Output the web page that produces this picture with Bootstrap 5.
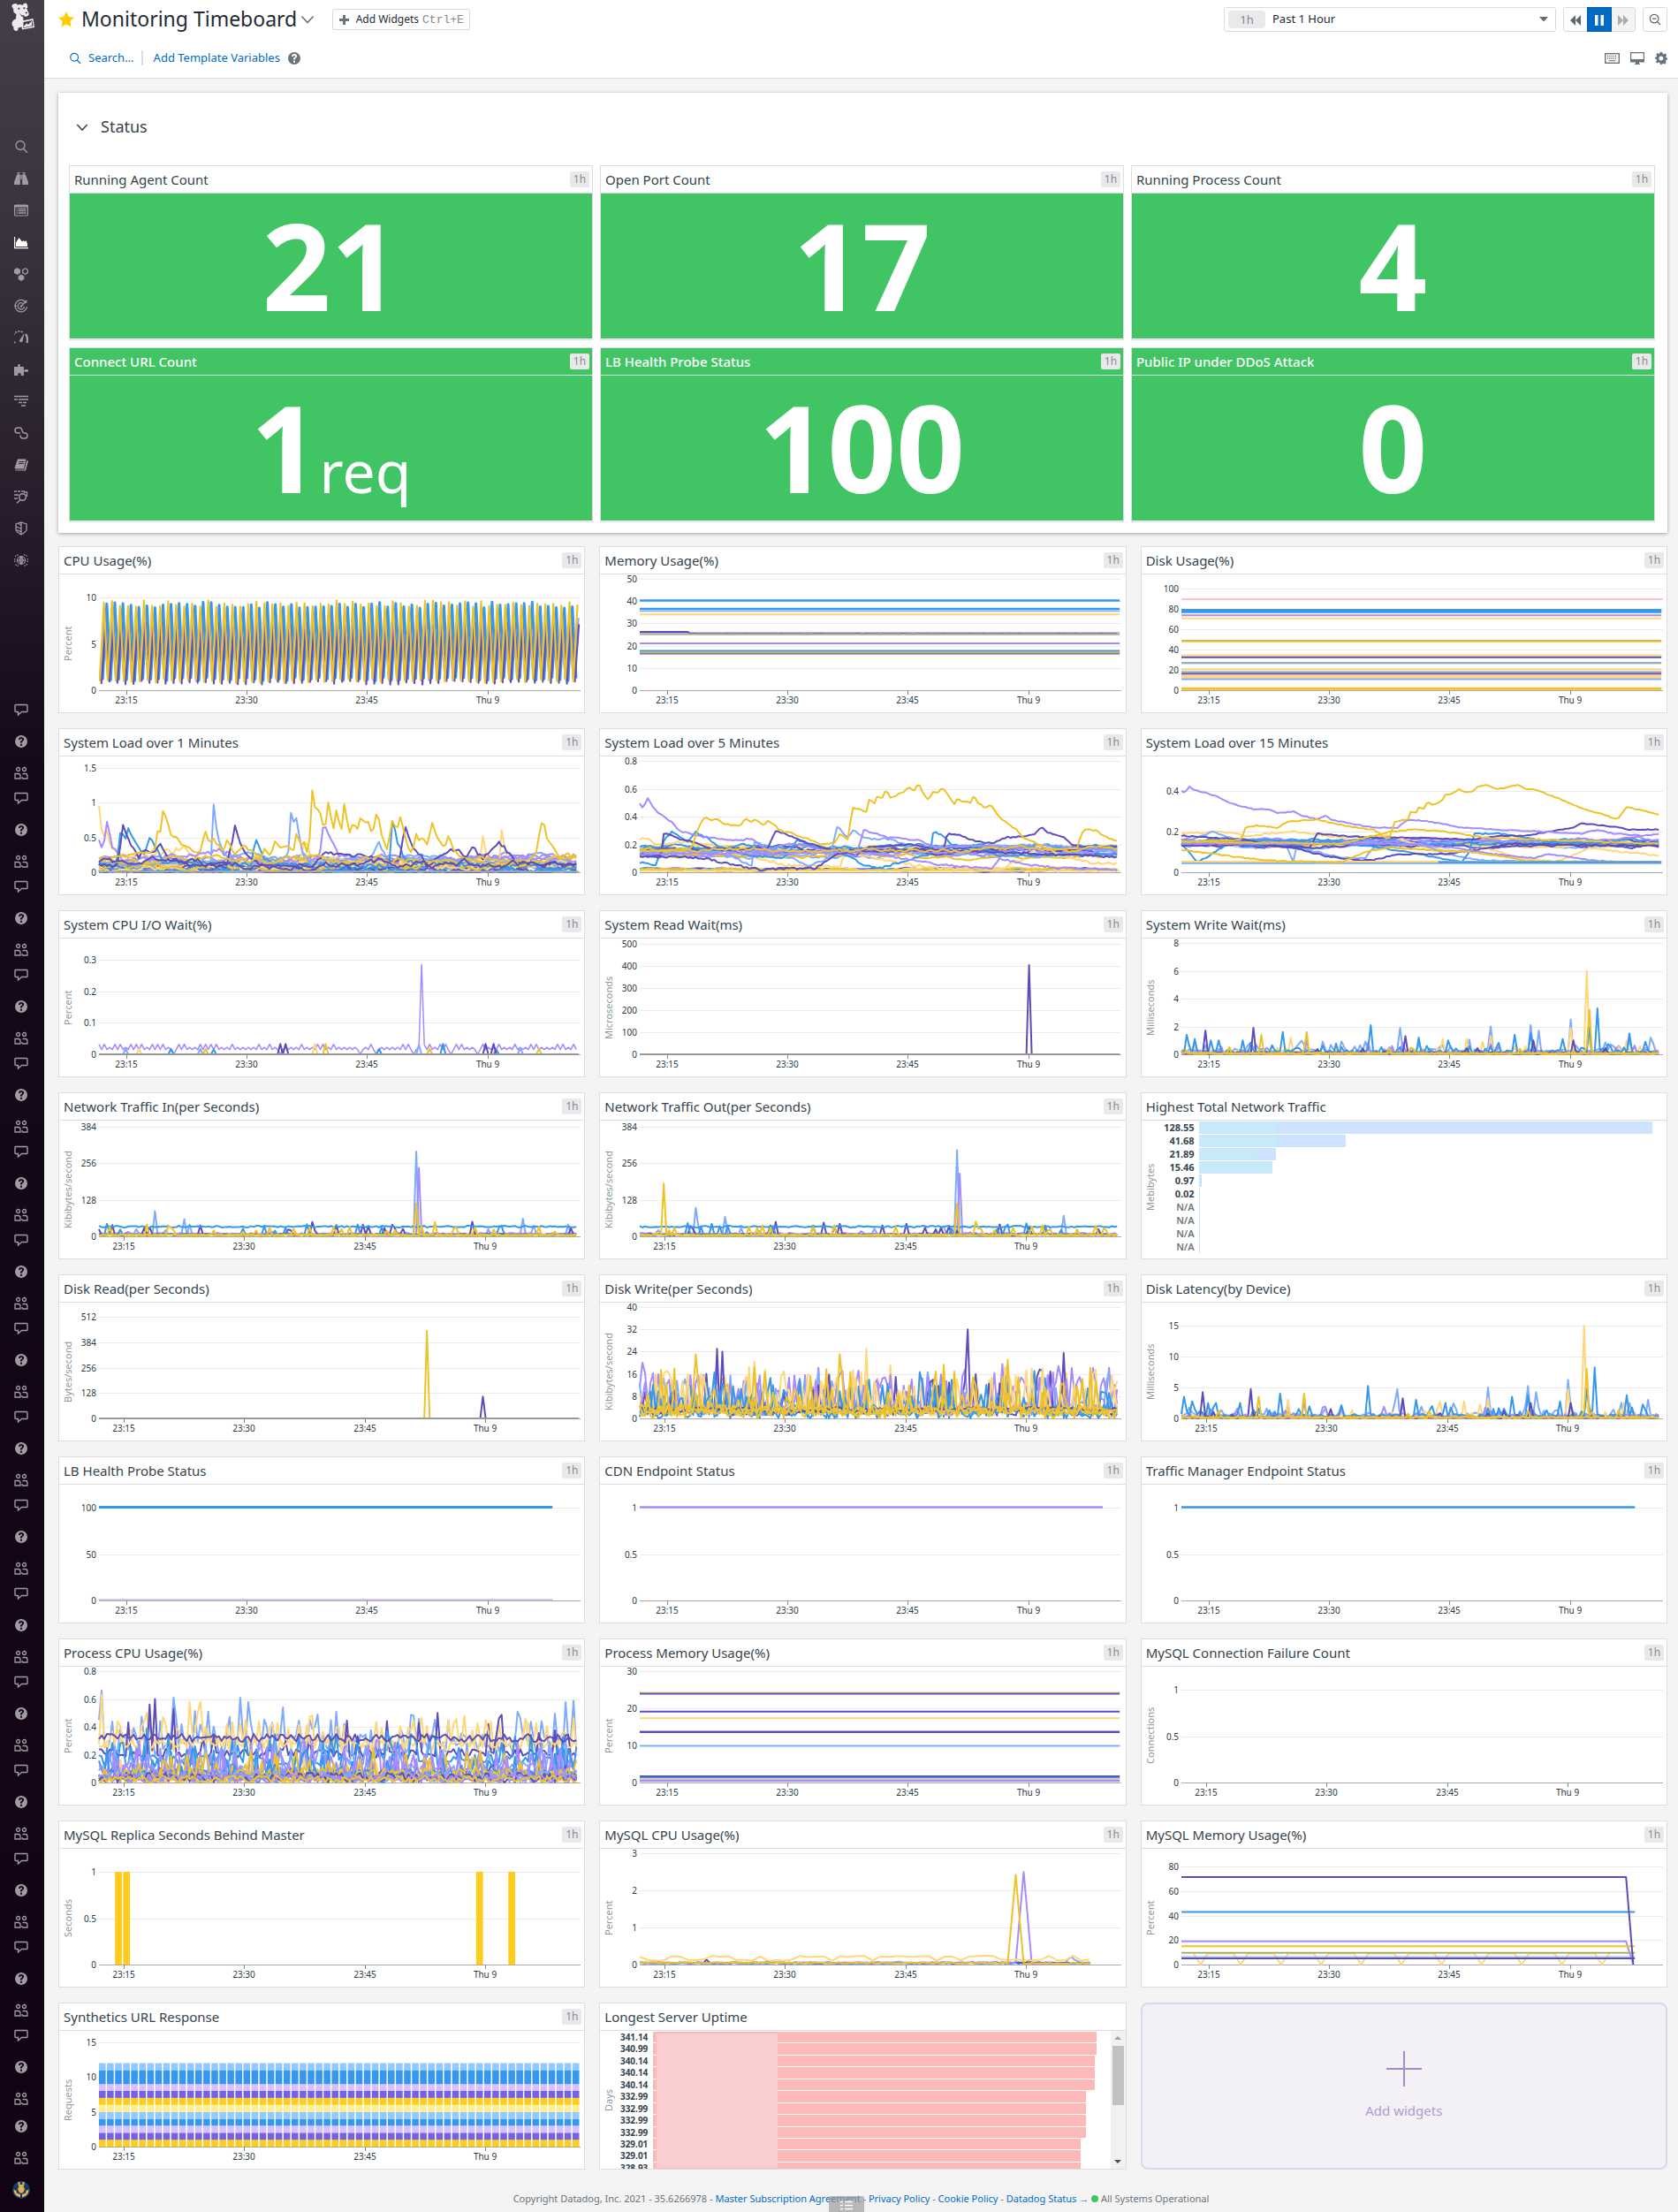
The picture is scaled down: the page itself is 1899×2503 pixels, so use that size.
<!DOCTYPE html>
<html lang="en">
<head>
<meta charset="utf-8">
<meta name="viewport" content="width=device-width, initial-scale=1">
<title>Monitoring Timeboard</title>
<link href="https://cdn.jsdelivr.net/npm/bootstrap@5.3.0/dist/css/bootstrap.min.css" rel="stylesheet">
<style>
  body { font-family: "Noto Sans", sans-serif; font-size: 13px; background: #f4f4f4; color: #2b3a45; }
  a { color: #006bc2; text-decoration: none; }
  .side { width: 50px; flex: none; background: linear-gradient(#453e4a 0, #3c3541 220px, #150819 870px, #120415 100%); color: #a09aa4; }
  .side a { color: inherit; height: 36px; width: 48px; }
  .side a.active { color: #fff; }
  .side svg { width: 16px; height: 16px; }
  .side .logo { height: 38px; color: #eceaee; }
  .side .logo svg { width: 28px; height: 32px; }
  .side .main-links { margin: 110px 0 133px; }
  .side .group { height: 100px; }
  .side .last { margin-top: 3px; padding-bottom: 7px; }
  .side a .avatar { width: 20px; height: 20px; }
  .topbar { background: #fff; border-bottom: 1px solid #dcdde0; height: 89px; padding: 8px 12px 0 16px; color: #69737b; }
  .topbar h1 { font-size: 23px; color: #1f2a33; line-height: 26px; padding-bottom: 2px; }
  .sub-tools { margin-top: 20px; }
  .view-tools { gap: 12px; }
  .tool { height: 28px; border: 1px solid #d9dbdf; background: #fff; color: #5d6870; padding: 0; width: 28px; border-radius: 3px; line-height: 1; }
  .tool + .tool { margin-left: -1px; }
  .tool.on { background: #006bc2; border-color: #005bb0; color: #fff; z-index: 1; }
  .tool.off { background: #f4f4f5; color: #a9adb1; }
  .tool-wide { height: 24px; width: 156px; margin-left: 20px; font-size: 12px; color: #1f2a33; border: 1px solid #d9dbdf; border-radius: 2px; background: #fff; padding: 0; }
  .tool-wide kbd { font: 13px "Liberation Mono", monospace; color: #82898f; background: none; padding: 0; }
  .span-pick { width: 376px; height: 28px; border: 1px solid #d9dbdf; border-radius: 3px; background: #fff; padding: 0 4px; }
  .span-pill { width: 42px; height: 20px; border-radius: 4px; background: #e9e9eb; color: #7f868b; text-align: center; line-height: 20px; }
  .span-pick select { appearance: none; border: 0; color: #1f2a33; padding: 0 0 0 8px; background: url("data:image/svg+xml,%3Csvg xmlns='http://www.w3.org/2000/svg' width='10' height='6'%3E%3Cpath d='M0 0h10L5 5.500z' fill='%235d6870'/%3E%3C/svg%3E") no-repeat right 4px center; }
  .rule { width: 2px; height: 17px; background: #dcdde0; }
  .board { padding: 16px 12px 0 16px; }
  .status { background: #fff; box-shadow: 0 1px 4px rgba(0,0,0,.35); padding: 0 14px 12px 12px; }
  .status h2 { font-size: 18px; height: 82px; padding: 4px 0 8px 8px; gap: 14px; color: #36444e; }
  .tiles { --bs-gutter-x: 8px; --bs-gutter-y: 8px; }
  .charts { --bs-gutter-x: 16px; --bs-gutter-y: 17px; margin-top: -2px; }
  .tile, .widget { background: #fff; border: 1px solid #dcdde0; }
  .tile { height: 198px; padding-bottom: 1px; }
  .widget { height: 189px; }
  .w-head { height: 31px; flex: none; border-bottom: 1px solid #dcdde0; padding: 0 3px 0 5px; }
  .w-head h3 { font-size: 15px; color: #36444e; line-height: 30px; }
  .w-head span { width: 22px; height: 18px; border-radius: 2px; background: #e9e9eb; color: #858b90; font-size: 12px; line-height: 18px; text-align: center; }
  .big { background: #41c464; color: #fff; font-weight: 700; font-size: 136px; line-height: 1; padding-bottom: 2px; }
  .big small { font-size: 66px; font-weight: 400; }
  .tile.solid .w-head { background: #41c464; border-color: #dcf4e2; }
  .tile.solid h3 { color: #fff; font-weight: 500; }
  .unit { width: 20px; flex: none; font-size: 11px; color: #90969a; writing-mode: vertical-rl; transform: rotate(180deg); text-align: center; line-height: 20px; }
  .plot { flex: 1; min-width: 0; height: 156px; overflow: hidden; }
  .plot svg { display: block; }
  .plot text { font-size: 10px; fill: #2b3a45; }
  .rank { display: grid; flex: 1; min-width: 0; }
  .rank b { text-align: right; color: #36444e; }
  .traffic { grid-template-columns: 40px 1fr; column-gap: 5px; grid-auto-rows: 15px; padding: 0 16px 0 0; font-size: 11px; line-height: 15px; }
  .traffic b.na { color: #6d767d; font-weight: 600; }
  .traffic i { height: 14px; margin-top: 1px; background: #cce2ff; }
  .traffic i u { display: block; height: 14px; background: #c6eafa; }
  .uptime-scroll { overflow-y: scroll; scrollbar-width: none; height: 156px; flex: 1; }
  .uptime-scroll::-webkit-scrollbar { display: none; }
  .uptime { grid-template-columns: 34px 1fr; column-gap: 6px; grid-template-rows: repeat(20, 1fr); height: 270px; padding: 1px 16px 0 0; font-size: 10px; line-height: 12px; }
  .uptime i { background: #fdb9b8; margin-bottom: 1px; }
  .bar-track { width: 17px; height: 156px; background: #f1f1f1; padding: 6px 0; }
  .bar-thumb { width: 13px; height: 67px; margin: 7px 0 auto; background: #c1c1c1; }
  .veil { left: 64px; top: 3px; bottom: 1px; width: 137px; background: #facdcf; }
  .add-widget { height: 189px; border: 2px solid #dcd7ea; border-radius: 8px; background: #f3f1f6; color: #b39bce; font-size: 15px; padding: 0; }
  footer { font-size: 11px; color: #69737b; height: 49px; padding-top: 24px; line-height: 18px; }
  .dot { width: 8px; height: 8px; background: #41c464; }
  .dock { left: 50%; bottom: 0; margin-left: -12px; width: 40px; height: 19px; border: 0; border-radius: 2px 2px 0 0; background: rgba(150,150,150,.65); padding: 0; line-height: 1; }
</style>
<script src="https://cdn.jsdelivr.net/npm/bootstrap@5.3.0/dist/js/bootstrap.bundle.min.js"></script>
</head>
<body>
<svg class="d-none" xmlns="http://www.w3.org/2000/svg">
  <symbol id="i-search" viewBox="0 0 16 16"><circle cx="7" cy="6.500" r="5" fill="none" stroke="currentColor" stroke-width="1.300"/><path d="M10.500 10.200 15 14.700" stroke="currentColor" stroke-width="1.500"/></symbol>
  <symbol id="i-zoomout" viewBox="0 0 16 16"><circle cx="7" cy="7" r="5.500" fill="none" stroke="currentColor" stroke-width="1.400"/><path d="M11 11l4 4M4.500 7h5" stroke="currentColor" stroke-width="1.500"/></symbol>
  <symbol id="i-bino" viewBox="0 0 16 16"><path fill="currentColor" d="M3.500 1h3v1.500h-3zM9.500 1h3v1.500h-3zM3.300 3.200h3.500V15H0v-3zM12.700 3.200H9.200V15H16v-3zM7.300 4h1.400v5H7.300z"/></symbol>
  <symbol id="i-list" viewBox="0 0 16 16"><rect x=".6" y="2" width="14.800" height="12" rx="1" fill="none" stroke="currentColor" stroke-width="1.200"/><path fill="currentColor" d="M0 2h16v2.500H0z"/><path d="M2.500 6.500h1m1 0h9M2.500 8.700h1m1 0h9M2.500 11h1m1 0h9" stroke="currentColor" stroke-width="1.300"/></symbol>
  <symbol id="i-chart" viewBox="0 0 16 16"><path fill="currentColor" d="M0 2h1.200v12H16v1.200H0zM2 13V8.500L5.500 3 9 7.500 10.500 6l1.500 1.500L13.500 6 15 10v3z"/></symbol>
  <symbol id="i-hex" viewBox="0 0 16 16"><path fill="currentColor" d="M3.500 1 7 3v4L3.500 9 0 7V3zM8 8.500l3.300 1.900v3.700L8 16l-3.300-1.900v-3.700z"/><path d="M12.500 1.700 15.300 3.300v3.300l-2.800 1.600-2.800-1.600V3.300z" fill="none" stroke="currentColor" stroke-width="1.300"/></symbol>
  <symbol id="i-target" viewBox="0 0 16 16"><g fill="none" stroke="currentColor" stroke-width="1.300"><path d="M11.500 2.500A6.700 6.700 0 1 0 14.500 9M10 5.200A3.700 3.700 0 1 0 11.600 9M8 8.500 14.500 2M12 2v2.300h2.500"/></g><circle cx="8" cy="8.500" r="1.300" fill="currentColor"/><path d="M0 8h3" stroke="currentColor"/></symbol>
  <symbol id="i-gauge" viewBox="0 0 16 16"><path d="M1.500 14A7 7 0 0 1 10 2.300" fill="none" stroke="currentColor" stroke-width="1.700" stroke-dasharray="2 1.300"/><path d="M13 4q3.500 5 1.300 10" fill="none" stroke="currentColor" stroke-width="2.400"/><path d="M11.500 3 9.700 11.500a1.800 1.800 0 1 1-3.200-1.300z" fill="currentColor"/></symbol>
  <symbol id="i-puzzle" viewBox="0 0 16 16"><path fill="currentColor" d="M0 5h4.500q-1.200-3 1-3t1 3H11v4q3-1.500 5-.5v2q-2 1-5-.5V15H7.500q1-3-1.500-3t-1.500 3H0z"/></symbol>
  <symbol id="i-lines" viewBox="0 0 16 16"><path d="M0 2.500h16M0 6h4m1 0h11M5 9.500h4m1 0h4M8 13h5" stroke="currentColor" stroke-width="1.700"/></symbol>
  <symbol id="i-link" viewBox="0 0 16 16"><path d="M7 8H4a3 3 0 0 1 0-6h2q2.500 0 3 3t3 3a3 3 0 0 1 0 6H10q-3 0-3-3.500" fill="none" stroke="currentColor" stroke-width="1.500"/></symbol>
  <symbol id="i-book" viewBox="0 0 16 16"><path fill="currentColor" d="M4 1.500h9.500L11 12.500H1.500L.5 11.500zM14.500 2.500 16 4l-3 10.500H2l-1-1h10.500z"/><path d="M5.500 4.500h6M5 6.500h6" stroke="#2d2432"/></symbol>
  <symbol id="i-trace" viewBox="0 0 16 16"><path d="M0 2h3m1 0h3m1 0h4M0 6h5M0 10h4" stroke="currentColor" stroke-width="1.700"/><circle cx="9.500" cy="8.500" r="3.800" fill="none" stroke="currentColor" stroke-width="1.500"/><path d="M7 11.500 3 15.500M11 3h3.500v5" stroke="currentColor" stroke-width="1.400" fill="none"/></symbol>
  <symbol id="i-shield" viewBox="0 0 16 16"><path d="M8 1l6 2v7q-2 3-6 5-4-2-6-5V3zM8 1v14M2.500 6 8 8.500M3 9.500l5 2.300M5 2.500l3 2" fill="none" stroke="currentColor" stroke-width="1.300"/></symbol>
  <symbol id="i-globe" viewBox="0 0 16 16"><g fill="none" stroke="currentColor" stroke-width="1.200"><circle cx="8" cy="8" r="4.500"/><path d="M3.500 8h9M8 3.500v9M8 3.500q-4 4.500 0 9M8 3.500q4 4.500 0 9"/></g><path d="M1 3.500 5 1.500M11 1.500l4 2M15 12.500l-4 2M5 14.500l-4-2M.8 6v4M15.200 6v4" stroke="currentColor" stroke-width="1.300" stroke-dasharray="1.500 1"/></symbol>
  <symbol id="i-chat" viewBox="0 0 16 16"><path d="M2 2.500h12q1 0 1 1v6q0 1-1 1H8.500L4.500 14v-3.500H2q-1 0-1-1v-6q0-1 1-1z" fill="none" stroke="currentColor" stroke-width="1.400"/></symbol>
  <symbol id="i-help" viewBox="0 0 16 16"><path fill="currentColor" fill-rule="evenodd" d="M8 1a7 7 0 1 0 0 14A7 7 0 0 0 8 1zM5 6q0-3 3-3t3.200 2.600q0 1.700-2.200 2.900v1H7V7.700q2-.7 2-2T8 4.800 6.900 6zM7 10.700h2v2H7z"/></symbol>
  <symbol id="i-team" viewBox="0 0 16 16"><g fill="none" stroke="currentColor" stroke-width="1.300"><circle cx="4.500" cy="3.500" r="2"/><circle cx="11.500" cy="3.500" r="2"/><path d="M1 14V8.500h3.500Q7 8.500 7 11v3zM9 14h6v-3q0-2.500-2.500-2.500H9.500M9 14v-2"/></g></symbol>
  <symbol id="i-down" viewBox="0 0 16 16"><path d="M1.500 4.500 8 11.500l6.500-7" fill="none" stroke="currentColor" stroke-width="1.700"/></symbol>
</svg>

<div class="d-flex position-relative">
  <nav class="side d-flex flex-column" aria-label="Main">
    <a class="logo d-flex align-items-center justify-content-center w-100" href="#" aria-label="Home"><svg viewBox="0 0 28 32" fill="currentColor"><path d="M2.500 3q1.500-2.500 5-2l1 1.500Q12 1.500 14.500 3q1-3 4-2.500 2 1.500 1.800 5-.8 1-1.300.3l1.500 4q1.500 1.500 1 4-1.500 2.500-4.500 1.700l-2-.7.5 5.500 11-2.300 1.500 10L14 30.500l-.5-3-4 1q.5 4-3 3.500-3-1-2-4.500-2.500-1.500-2-4.500Q3.500 19 7 18.500L7.500 13 4.500 11l-.5-4.500q-2-1-1.500-3.500z"/><path d="M9.500 5.800h1.800v2H9.500zM15.500 5.300h1.800v2h-1.800zM17.500 11q2-1 2.700.3l-1.700 1.400zM10 11.500q3 3.500 7 3l-3 1.500zM15.500 22l10-2 1 6.500L15.500 29z" fill="#403945"/><path d="M16 26.500l3-3 2 1.300 4-4v5.500l-9 2z"/></svg></a>
    <div class="main-links d-flex flex-column" id="mainLinks"></div>
    <div id="groups"></div>
    <div class="last d-flex flex-column" id="lastLinks"></div>
  </nav>

  <div class="flex-grow-1 d-flex flex-column overflow-hidden">
    <header class="topbar">
      <div class="d-flex align-items-center">
        <svg width="18" height="18" viewBox="0 0 18 18" class="flex-shrink-0"><path fill="#ffcc00" d="M9 0l2.800 5.900 6.200.8-4.600 4.400 1.200 6.400L9 14.400l-5.600 3.100 1.200-6.400L0 6.700l6.200-.8z"/></svg>
        <h1 class="mb-0 ms-2 fw-normal">Monitoring Timeboard</h1>
        <svg width="16" height="16" class="ms-1"><use href="#i-down"/></svg>
        <button class="tool-wide d-flex align-items-center justify-content-center gap-1" type="button"><svg width="11" height="11" viewBox="0 0 11 11" class="me-1"><path d="M5.500 0v11M0 5.500h11" stroke="#69737b" stroke-width="3"/></svg>Add Widgets <kbd>Ctrl+E</kbd></button>
        <div class="ms-auto d-flex gap-2">
          <div class="span-pick d-flex align-items-center">
            <span class="span-pill">1h</span>
            <label for="span" class="visually-hidden">Time span</label>
            <select id="span" class="flex-grow-1"><option>Past 1 Hour</option></select>
          </div>
          <div class="btn-group" role="group" aria-label="Playback">
            <button class="tool rounded-end-0" type="button" aria-label="Back"><svg width="12" height="12" viewBox="0 0 12 12"><path fill="currentColor" d="M6 0v12L0 6zM12 0v12L6 6z"/></svg></button>
            <button class="tool on rounded-0" type="button" aria-label="Pause"><svg width="12" height="12" viewBox="0 0 12 12"><path fill="currentColor" d="M1 0h3.500v12H1zM7.500 0H11v12H7.500z"/></svg></button>
            <button class="tool off rounded-start-0" type="button" aria-label="Forward"><svg width="12" height="12" viewBox="0 0 12 12"><path fill="currentColor" d="M0 0v12l6-6zM6 0v12l6-6z"/></svg></button>
          </div>
          <button class="tool" type="button" aria-label="Zoom out"><svg width="14" height="14"><use href="#i-zoomout"/></svg></button>
        </div>
      </div>
      <div class="sub-tools d-flex align-items-center ps-2">
        <a href="#" class="d-flex align-items-center ms-1"><svg width="14" height="14" class="me-2"><use href="#i-search"/></svg>Search...</a>
        <span class="rule mx-2"></span>
        <a href="#" class="ms-1">Add Template Variables</a>
        <svg width="16" height="16" class="ms-2"><use href="#i-help"/></svg>
        <div class="view-tools ms-auto d-flex align-items-center">
          <svg width="17" height="12" viewBox="0 0 17 12"><rect x=".7" y=".7" width="15.600" height="10.600" fill="none" stroke="currentColor" stroke-width="1.400"/><path d="M3 3.500h11M3 6h11" stroke="currentColor" stroke-width="1.300" stroke-dasharray="1.200 1"/><path d="M4.500 8.700h8" stroke="currentColor"/></svg>
          <svg width="16" height="14" viewBox="0 0 16 14"><path d="M.6 9V.6h14.800V9" fill="none" stroke="currentColor" stroke-width="1.200"/><path fill="currentColor" d="M0 8h16v3.500h-6V13h1v1H5v-1h1v-1.500H0z"/></svg>
          <svg width="14" height="14" viewBox="0 0 14 14"><path fill="currentColor" fill-rule="evenodd" d="M5.700 0h2.600l.4 1.900 1.100.5L11.500 1.300l1.700 2-1 1.700.3 1.200 1.500.6v1.700l-1.700.7-.5 1.200.9 1.600-1.800 1.700-1.600-1-1.100.5L7.700 14H6l-.7-1.900-1.200-.5-1.700 1-1.500-1.800L2 9.200 1.700 8 0 7.500V5.700l1.700-.5.5-1.100-1-1.700 1.800-1.500 1.600 1 .8-.3zM7 4.500a2.500 2.500 0 1 0 0 5 2.500 2.500 0 0 0 0-5z"/></svg>
        </div>
      </div>
    </header>

    <main class="board">
      <section class="status">
        <h2 class="fw-normal mb-0 d-flex align-items-center"><svg width="14" height="14"><use href="#i-down"/></svg><span>Status</span></h2>
        <div class="row row-cols-3 tiles" id="tiles"></div>
      </section>
      <section class="row row-cols-3 charts" id="charts"></section>
    </main>
    <footer class="text-center">Copyright Datadog, Inc. 2021 - 35.6266978 - <a href="#">Master Subscription Agreement</a> - <a href="#">Privacy Policy</a> - <a href="#">Cookie Policy</a> - <a href="#">Datadog Status →</a> <span class="dot rounded-circle d-inline-block"></span> All Systems Operational</footer>
  </div>
  <button class="dock position-absolute" type="button" aria-label="Shortcuts"><svg width="14" height="11" viewBox="0 0 14 11"><path d="M0 1.500h3m2 0h9M0 5.500h3m2 0h9M0 9.500h3m2 0h9" stroke="#fff" stroke-width="1.600"/></svg></button>
</div>

<script>
const byId = id => document.getElementById(id);
const link = (icon, label, cls = '') => `<a href="#" aria-label="${label}" class="d-flex align-items-center justify-content-center ${cls}"><svg><use href="#i-${icon}"/></svg></a>`;
byId('mainLinks').innerHTML = [['search','Search'],['bino','Watchdog'],['list','Events'],['chart','Dashboards','active'],['hex','Infrastructure'],['target','Monitors'],['gauge','Metrics'],['puzzle','Integrations'],['lines','APM'],['link','CI'],['book','Notebooks'],['trace','Logs'],['shield','Security'],['globe','UX Monitoring']].map(l => link(...l)).join('');
byId('groups').innerHTML = `<div class="group">${link('chat','Chat')}${link('help','Help')}${link('team','Team')}</div>`.repeat(16);
byId('lastLinks').innerHTML = link('help','Help') + link('team','Team') + '<a href="#" aria-label="Account" class="d-flex align-items-center justify-content-center"><svg class="avatar" viewBox="0 0 20 20"><circle cx="10" cy="10" r="10" fill="#163a63"/><path fill="#e0b060" d="M6.500 1h2v3h3V1h2v3.500L12.500 6l1.500 3-1.500 3.500L10 14l-2.500-1.500L6 9l1.500-3-1-1.500zM1.500 9.500l3 1.500.5 2.500 4 1.500v3.500l-3.500-1.500q-4-2-4-7.500zM18.500 9.500l-3 1.500-.5 2.500-4 1.500v3.500l3.500-1.500q4-2 4-7.500z"/></svg></a>';

const head = (title, badge = true, weight = 'fw-normal') => `<div class="w-head d-flex align-items-center justify-content-between"><h3 class="mb-0 ${weight} text-truncate">${title}</h3>${badge ? '<span>1h</span>' : ''}</div>`;
byId('tiles').innerHTML = [['Running Agent Count','21'],['Open Port Count','17'],['Running Process Count','4'],['Connect URL Count','1<small>req</small>',1],['LB Health Probe Status','100',1],['Public IP under DDoS Attack','0',1]]
  .map(([t, v, s]) => `<div class="col"><div class="tile d-flex flex-column ${s ? 'solid' : ''}">${s ? head(t, true, '') : head(t)}<div class="big flex-grow-1 d-flex align-items-center justify-content-center"><div>${v}</div></div></div></div>`).join('');

/* palette */
const Y = '#efc328', LY = '#ffd779', B = '#3598ec', LB = '#7fabff', P = '#5c4dbd', LP = '#a58bff', MIX = [LB, LP, P, B, LY, Y];

/* seeded random numbers keep every load the same */
let seed = 1;
const rnd = () => { seed = (seed + 0x6D2B79F5) | 0; let t = Math.imul(seed ^ seed >>> 15, 1 | seed); t = t + Math.imul(t ^ t >>> 7, 61 | t) ^ t; return ((t ^ t >>> 14) >>> 0) / 4294967296; };
const END = 59.8;
const steps = f => { const a = []; for (let i = 0; i < 180; i++) a.push([i * END / 180, Math.max(0, f(i))]); return a; };
const flat = (c, v, w = 1.5, end = END) => ({ c, w, p: [[0, v], [end, v]] });
/* linear path through [minute, value, minute, value, ...] with jitter */
const keyed = (c, k, j) => ({ c, w: 2, p: steps(i => { const t = i / 3; let n = 2; while (n < k.length - 2 && k[n] < t) n += 2; const u = Math.min(1, Math.max(0, (t - k[n - 2]) / (k[n] - k[n - 2]))); return k[n - 1] + (k[n + 1] - k[n - 1]) * u + (rnd() - .5) * j; }) });
const drift = (c, v, j) => { let x = v; return { c, w: 2, p: steps(() => { x += (v - x) * .15 + (rnd() - .5) * j; return x; }) }; };
const spikes = (c, base, noise, rate, hi, own = {}) => ({ c, w: 2, p: steps(i => own[i] ?? base + rnd() * noise + (rnd() < rate ? (.3 + rnd() * .7) * hi : 0)) });
const wave = (c, from, to, lo, hi, w) => { const p = []; for (let m = -1; m < 60; m++) p.push([m + from, lo + rnd() * .4], [m + to, hi + rnd() * .7 - .2]); return { c, w, p: p.filter(q => q[0] >= 0 && q[0] <= END) }; };
const many = (n, f) => Array.from({ length: n }, (_, i) => f(i, MIX[i % 6]));

const charts = [
  { t: 'CPU Usage(%)', u: 'Percent', max: 12, k: [0, 5, 10], s: () => [wave(LB, .2, .75, 1, 8, 2), wave(LP, .1, .6, 1, 7, 2), wave(B, .45, .98, 1, 9, 3), wave(P, .3, .8, .6, 6.8, 2), wave(Y, .1, .62, .8, 9.2, 2.2)] },
  { t: 'Memory Usage(%)', max: 50, k: [0, 10, 20, 30, 40, 50], s: () => [flat(B, 40.3, 2.5), flat(B, 36.5, 2.5), flat(LB, 35.5, 1.5), flat(LY, 34, 2), flat(LB, 25.8, 1.5), keyed(P, [0, 26.2, 6, 26.2, 6.3, 25.3, 60, 25.3], .1), flat('#b8b384', 25.1, 2), flat(LP, 21, 2), flat(B, 17.7, 2), flat(P, 16.4, 1.5), flat('#c4a94c', 16.9, 2)] },
  { t: 'Disk Usage(%)', max: 110, k: [0, 20, 40, 60, 80, 100], s: () => [flat('#ffc4c4', 90, 2, 60), flat(B, 79, 3), flat(B, 77, 2), flat(LP, 74, 2), flat(LY, 71, 2), flat('#a08c50', 49, 1.5), flat(Y, 48.2, 2), flat(LY, 34.5, 2), flat(P, 32.5, 2), flat(LB, 27, 2), flat(LY, 25.8, 1), flat(LY, 20.8, 2), flat('#8fa3c0', 17.8, 2), flat(P, 16.2, 2), flat(LY, 13.5, 4), flat(LB, 10.8, 2), flat(Y, 1.5, 3)] },
  { t: 'System Load over 1 Minutes', max: 1.6, k: [0, .5, 1, 1.5], s: () => [...many(18, (i, c) => drift(c, .01 + i % 7 * .028, .07)),
      keyed(LY, [0,.93,.5,.5,1,.6,1.7,.3,4,.2,9,.3,10.5,.35,13,.1,25,.15,25.8,.45,26.5,.2,47.5,.1,48,.5,48.7,.15,50,.15,50.3,.6,51,.2,52,.1,60,.1], .08),
      keyed(LP, [0,.43,.4,.3,1,.7,1.7,.35,3,.15,10,.25,15,.3,20,.1,27.5,.2,28.1,.68,29,.5,30,.25,35,.15,60,.25], .08),
      keyed(LB, [0,.1,14,.15,14.33,1,14.8,.5,15.5,.3,17,.1,23.6,.2,24,.83,24.3,.7,24.6,.82,25.5,.25,27,.15,34,.2,35,.42,36,.2,60,.1], .05),
      keyed(B, [0,.1,2.2,.1,2.7,.6,3.3,.45,3.7,.63,4.5,.48,5.5,.25,6.3,.48,6.7,.45,8,.15,19,.1,19.6,.5,20.5,.2,22,.1,36.3,.1,36.7,.77,37.3,.45,38.3,.15,60,.05], .07),
      keyed(P, [0,.1,2.3,.1,3,.65,4,.4,5,.2,5.8,.37,6.5,.25,7.6,.4,8.5,.2,11,.1,16,.1,17,.65,17.7,.4,18.5,.25,20,.1,27,.1,28,.28,32,.25,37.5,.15,38.3,.68,39,.4,40,.28,41,.1,44.6,.35,46,.2,46.6,.38,48,.2,50,.44,51,.3,52,.15,60,.1], .06),
      keyed(Y, [0,.15,2,.22,6.7,.3,7.1,.36,7.4,.65,7.7,.58,8,.89,8.6,.7,9.1,.5,9.7,.52,10.5,.38,11.5,.33,12.6,.28,13.3,.58,13.8,.4,14.3,.48,15,.38,15.5,.28,16,.45,17,.27,18,.38,20.3,.2,20.7,.37,21.3,.22,22,.43,22.8,.36,23.5,.4,24.3,.3,24.6,.55,25.3,.4,25.7,.42,26.2,.2,26.67,1.18,27,.92,27.5,.9,28.2,.6,28.67,.99,29.3,.6,29.7,.9,30.3,.58,30.67,.98,31.3,.55,31.8,.75,32.2,.58,32.8,.83,33.2,.63,33.5,.8,34,.6,34.4,.63,34.8,.92,35.3,.55,36,.32,36.7,.77,37.2,.6,37.7,.8,38.5,.4,39.2,.25,39.6,.57,40,.45,40.5,.52,41,.4,41.7,.72,42.2,.5,43.2,.33,43.7,.53,44.2,.35,45,.25,47,.15,50,.1,54,.2,54.7,.3,55.3,.7,55.7,.68,56,.5,56.6,.4,57.4,.22,60,.2], .04), drift(Y, .17, .08), drift(P, .12, .08), flat('#9fb0a0', .01, 2)] },
  { t: 'System Load over 5 Minutes', max: .8, k: [0, .2, .4, .6, .8], s: () => [...many(10, (i, c) => drift(c, .12 + i % 5 * .016, .02)), ...many(6, (i, c) => drift(c, .02, .012)), flat(LY, .01, 2),
      keyed(LY, [0,.24,1,.25,2,.2,5,.22,9,.2,12,.16,15,.1,18,.05,25,.04,25.7,.16,28,.12,33,.06,38,.03,45,.02,48,.1,50,.2,53,.12,56,.07,60,.06], .02),
      keyed(LB, [0,.15,10,.15,14,.05,14.3,.22,16,.18,19,.1,21,.05,23.7,.1,24.7,.33,26,.25,26.7,.3,28.5,.24,31,.24,33,.2,38,.18,50,.2,60,.15], .015),
      keyed(B, [0,.07,2,.05,3,.22,4,.3,5,.25,6,.22,7,.29,8,.26,10,.18,14,.12,18,.1,19.7,.23,22,.18,26,.12,28,.05,30,.03,36.3,.13,36.7,.29,38,.26,39,.2,42,.18,45,.12,60,.13], .015),
      keyed(P, [0,.13,2.7,.12,3,.28,5,.24,7,.21,9,.17,16,.17,17,.3,18,.28,20,.23,22,.19,25,.15,27,.12,28.5,.18,34,.2,38,.15,38.4,.28,40,.27,42,.22,44,.21,46,.25,48,.26,49.5,.28,50.2,.32,51,.29,53,.25,54,.2,55.5,.18,60,.18], .012),
      keyed(LP, [0,.5,.4,.46,1,.53,1.5,.48,2.5,.42,4,.36,5,.3,7,.26,9,.25,12,.23,14,.24,16,.15,17,.18,18,.2,20,.2,22,.17,27,.12,27.6,.22,28,.3,29,.29,31,.25,35,.23,37,.17,40,.19,50,.17,60,.17], .012),
      keyed(P, [0,.11,5,.11,8,.1,12,.05,15,.02,22,.03,25,.14,35,.16,60,.11], .015), keyed(LP, [0,.13,20,.14,27,.15,33,.1,38,.05,44,.03,45,.1,48,.06,52,.03,60,.02], .015),
      keyed(Y, [0,.15,6.5,.17,7.2,.3,7.9,.38,8.3,.4,9,.37,9.5,.39,10.5,.35,12.5,.33,13.3,.39,13.8,.36,14.4,.38,15.5,.34,16,.37,17,.33,17.5,.3,19,.28,21,.24,22.5,.2,23.5,.2,24.5,.22,25,.27,26,.24,26.6,.46,27.5,.46,28.3,.43,28.7,.53,29.3,.49,29.7,.55,30.3,.53,30.8,.6,31.3,.53,32,.55,33,.58,33.6,.61,34.3,.58,34.8,.64,35.5,.56,36.1,.52,36.8,.59,37.2,.56,37.8,.61,38.5,.56,39.3,.49,39.7,.53,40.3,.51,41.3,.5,41.8,.55,42.3,.5,43.3,.46,43.8,.49,45,.39,46,.35,47,.31,48,.25,50,.2,51,.16,54.7,.17,55.2,.28,55.7,.31,57,.3,58,.26,60,.22], .01),
      drift(Y, .16, .02)] },
  { t: 'System Load over 15 Minutes', max: .548, k: [0, .2, .4], s: () => [...many(10, (i, c) => drift(c, .13 + i % 4 * .009, .01)),
      keyed(LY, [0,.19,5,.2,8,.18,14,.2,20,.17,26,.18,30,.13,34,.1,38,.12,42,.07,47,.05,50,.1,51,.12,55,.1,58,.09,60,.08], .008),
      keyed(LB, [0,.14,4,.2,6,.17,13,.14,14,.05,14.3,.12,17,.1,20,.07,23,.07,24,.12,30,.14,33,.09,37,.06,45,.05,60,.05], .006),
      keyed(B, [0,.14,2,.05,3,.07,5,.12,7,.16,20,.15,25,.12,28,.1,31,.08,35,.05,36,.1,36.6,.19,40,.19,43,.17,46,.15,60,.14], .006),
      keyed(P, [0,.18,4,.17,8,.16,12,.13,16,.12,17,.19,20,.18,24,.17,30,.17,36,.16,40,.18,43,.18,46,.2,49,.22,50,.24,53,.23,56,.21,60,.21], .005),
      keyed(P, [0,.13,9,.14,14,.12,18,.08,22,.06,24,.06,27,.09,33,.09,37,.11,41,.14,60,.13], .006),
      keyed(LP, [0,.4,.4,.39,1,.42,2,.4,4,.38,5.5,.35,7,.33,9,.31,11,.31,12,.29,14,.3,15,.28,17,.26,18,.28,18.6,.26,21,.24,24,.22,27,.22,28.4,.26,31,.25,35,.22,39,.21,45,.2,50,.19,52,.21,54,.19,58,.18,60,.19], .005),
      keyed(LP, [0,.14,28,.14,34,.12,39,.09,44,.07,46,.09,51,.06,55,.05,60,.05], .005),
      flat(LB, .045, 2), flat(LY, .052, 2),
      keyed(Y, [0,.11,4,.09,8,.07,12,.055,20,.05,23,.1,26,.12,36,.1,40,.08,43,.055,60,.05], .005), keyed(Y, [0,.15,20,.14,26,.2,29,.21,33,.2,38,.17,45,.16,60,.14], .006),
      keyed(Y, [0,.15,7.5,.16,8,.22,9.5,.23,12,.22,13.3,.25,17,.26,19,.24,22,.22,24,.21,25.5,.17,26,.17,26.7,.25,28.4,.26,28.7,.3,29.3,.29,29.7,.32,30.3,.31,30.8,.35,31.3,.33,32.5,.35,33,.38,34,.39,34.8,.41,35.5,.39,36.5,.4,37,.42,38,.43,39.5,.41,41,.42,42,.43,43,.41,44,.41,46,.38,48,.35,49,.33,50.5,.31,53,.28,54.5,.26,55.6,.32,57,.31,60,.28], .005), { c: B, w: 2, p: [[32, .05], [END, .05]] }] },
  { t: 'System CPU I/O Wait(%)', u: 'Percent', max: .354, k: [0, .1, .2, .3], s: () => [{ c: LP, w: 1.5, p: steps(i => ({ 120: .02, 121: .285, 122: .03 })[i] ?? (i % 2 ? .015 : rnd() < .08 ? 0 : rnd() < .5 ? .032 : .022)) }, spikes(LB, 0, 0, 0, 0, { 10: .017, 38: .017, 120: .03, 158: .02 }), spikes(LY, 0, 0, 0, 0, { 15: .017, 81: .033 }), spikes(B, 0, 0, 0, 0, { 27: .017, 43: .015, 105: .017, 129: .033, 149: .015 }), spikes(P, 0, 0, 0, 0, { 68: .033, 70: .033, 145: .033, 148: .033 }), spikes(Y, 0, 0, 0, 0, { 40: .017, 85: .033, 124: .017, 165: .017 }), flat('#999', 0, 2)] },
  { t: 'System Read Wait(ms)', u: 'Microseconds', max: 504, k: [0, 100, 200, 300, 400, 500], s: () => [spikes(P, 0, 0, 0, 0, { 146: 404 }), flat('#999', 0, 2)] },
  { t: 'System Write Wait(ms)', u: 'Milliseconds', max: 8, k: [0, 2, 4, 6, 8], s: () => latency(1) },
  { t: 'Network Traffic In(per Seconds)', u: 'Kibibytes/second', max: 390, off: 1, k: [0, 128, 256, 384], s: () => network({ 21: 88, 32: 60, 119: 297, 159: 62 }, { 120: 240 }, { 119: 115, 126: 50 }) },
  { t: 'Network Traffic Out(per Seconds)', u: 'Kibibytes/second', max: 390, off: 1, k: [0, 128, 256, 384], s: () => network({ 21: 100, 32: 68, 119: 302, 159: 72 }, { 120: 220 }, { 9: 185, 119: 115, 126: 52 }) },
  { t: 'Highest Total Network Traffic', u: 'Mebibytes', rank: 'traffic' },
  { t: 'Disk Read(per Seconds)', u: 'Bytes/second', max: 561, off: 1, k: [0, 128, 256, 384, 512], s: () => [spikes(Y, 0, 0, 0, 0, { 123: 442 }), spikes(P, 0, 0, 0, 0, { 144: 110 }), flat('#999', 0, 2)] },
  { t: 'Disk Write(per Seconds)', u: 'Kibibytes/second', max: 40, off: 1, k: [0, 8, 16, 24, 32, 40], s: () => [spikes(LP, 1, 6, .45, 14), spikes(LB, 1, 4, .3, 13), spikes(LY, 1, 4, .35, 15, { 43: 20.500, 85: 25 }), spikes(P, 1, 3, .15, 14, { 29: 25, 31: 24, 123: 32, 159: 23.500 }), spikes(LP, 1, 6, .2, 10), spikes(B, 0, 5, .25, 13), spikes(LY, 1, 4, .25, 15), spikes(B, 0, 4, .2, 9), drift(P, 3.200, 1), spikes(Y, 0, 5, .2, 15, { 21: 23, 75: 23, 138: 21 }), spikes(Y, 1, 4, .1, 8), { c: Y, w: 2, p: steps(() => 1 + rnd() * 3) }] },
  { t: 'Disk Latency(by Device)', u: 'Milliseconds', max: 18, off: 1, k: [0, 5, 10, 15], s: () => latency(2.500) },
  { t: 'LB Health Probe Status', max: 120, k: [0, 50, 100], s: () => [flat(B, 100.500, 3, 56.500), flat('#c9bfea', .7, 2, 56.500)] },
  { t: 'CDN Endpoint Status', max: 1.2, k: [0, .5, 1], s: () => [flat(LP, 1.005, 2.500, 57.700)] },
  { t: 'Traffic Manager Endpoint Status', max: 1.2, k: [0, .5, 1], s: () => [flat(B, 1.005, 2.500, 56.500)] },
  { t: 'Process CPU Usage(%)', u: 'Percent', max: .8, off: 1, k: [0, .2, .4, .6, .8], s: () => [spikes(LB, .2, .15, .25, .25, { 1: .66, 28: .61, 53: .61 }), spikes(LY, .22, .1, .25, .2, { 1: .63, 34: .58, 38: .58 }), spikes(P, .18, .06, .08, .25, { 19: .56, 21: .6, 28: .53, 127: .5 }), spikes(LY, .25, .06, .1, .2), spikes(B, .12, .08, .2, .2), spikes(LB, .05, .1, .2, .2), spikes(LP, 0, .1, .3, .25), spikes(B, 0, .1, .25, .2), { c: P, w: 2, p: steps(() => .29 + rnd() * .06) }, spikes(P, .02, .07, .1, .05), spikes(LP, 0, .12, .25, .15), spikes(LY, 0, .08, .1, .12), spikes(Y, 0, .1, .2, .18), spikes(B, 0, .1, .15, .1), spikes(LP, 0, .1, .15, .12), spikes(Y, 0, .1, .1, .1), spikes(LB, 0, .08, 0, 0), spikes(P, 0, .07, 0, 0), spikes(LP, 0, .06, 0, 0), spikes(Y, 0, .05, 0, 0)] },
  { t: 'Process Memory Usage(%)', u: 'Percent', max: 30, k: [0, 10, 20, 30], s: () => [flat(LY, 24.300, 1.5), flat(P, 23.900, 2), flat(P, 19.100, 2), flat(LY, 17.300, 2), flat('#b5a5e8', 13.900, 1), flat(P, 13.600, 2), flat(LB, 9.900, 2), flat(P, 1.700, 2), flat(B, 1.300, 1.5), flat(Y, .9, 1), flat(LP, .5, 2.5)] },
  { t: 'MySQL Connection Failure Count', u: 'Connections', max: 1.2, off: 1, k: [0, .5, 1], s: () => [] },
  { t: 'MySQL Replica Seconds Behind Master', u: 'Seconds', max: 1.2, off: 1, k: [0, .5, 1], bars: [2, 3, 47, 51].map(t => [t, .85, [['#ffcc1c', 0, 1]]]), s: () => [] },
  { t: 'MySQL CPU Usage(%)', u: 'Percent', max: 3, off: 1, k: [0, 1, 2, 3], s: () => [keyed(LB, [0,.04,53,.04,54,.2,55,.05,56,.05], .05), spikes(B, .02, .04, 0, 0), spikes(P, .03, .03, .03, .1), keyed(LP, [0,.05,47,.05,48,2.500,49,.03,60,.04], .02), { c: LY, w: 2, p: Array.from({ length: 57 }, (_, i) => [i, .1 + (rnd() < .5 ? .1 : 0) + rnd() * .04]) }, keyed(Y, [0,.05,46,.04,47,2.400,48,.03,60,.04], .04)].map(s => ({ ...s, p: s.p.filter(q => q[0] <= 56.200) })) },
  { t: 'MySQL Memory Usage(%)', u: 'Percent', max: 91, k: [0, 20, 40, 60, 80], s: () => [{ c: LY, w: 2, p: Array.from({ length: 11 }, (_, i) => [[1.500 + i * 5, 9], [2.400 + i * 5, 0], [3.300 + i * 5, 9]]).flat() }, flat(B, 43, 2, 56.500), { c: LP, w: 2, p: [[0, 19], [55.400, 19], [56.300, 0]] }, flat(Y, 15, 2, 56.500), flat('#a8b45a', 9.500, 2, 56.500), flat(LB, 6.500, 1, 56.500), { c: P, w: 2, p: [[0, 71.500], [55.400, 71.500], [56.300, 0]] }, flat(P, 5, 2, 56.500)] },
  { t: 'Synthetics URL Response', u: 'Requests', max: 16, off: 1, k: [0, 5, 10, 15], s: () => [], bars: Array.from({ length: 60 }, (_, i) => [i, .84, [['#ffcc1c', 0, 1], ['#7661e2', 1, 2], ['#d6c0ff', 2, 3], [B, 3, 4], ['#92caff', 4, 5], ['#ffee92', 5, 6], ['#ffcc1c', 6, 7], ['#7661e2', 7, 8], ['#d6c0ff', 8, 9], [B, 9, 11], ['#92caff', 11, 12]]]) },
  { t: 'Longest Server Uptime', u: 'Days', rank: 'uptime' }
];

function latency(f) {
  const own = o => Object.fromEntries(Object.entries(o).map(([k, v]) => [k - (f > 1 ? 1 : 0), v * f]));
  return [spikes(LB, 0, .4 * f, .2, .7 * f, own({ 82: 1.900, 116: 2, 131: 2.100, 134: 1.700, 146: 2.500, 176: 1.200 })), spikes(LY, 0, .2 * f, .1, .5 * f, own({ 41: 1.200, 98: 1.100, 107: 1.100, 113: .9, 116: 1.300, 146: 1.900, 151: .3, 152: 6, 153: .8, 167: 1 })), spikes(LP, 0, .3 * f, .1, .6 * f, own({ 47: 1 })), spikes(B, 0, .3 * f, .13, .6 * f, own({ 2: 1.400, 5: 1.100, 11: 1, 14: 1, 23: 1, 38: 1.600, 71: 2.100, 89: 1.200, 100: 1, 125: 1.400, 131: 1.500, 143: 1.100, 153: 1.900, 156: 3.300, 168: 1.500, 174: .9 })), spikes(P, 0, .15 * f, .05, .5 * f, own({ 9: 1.700, 27: 1.900, 84: 1.300, 132: 1, 147: 1 })), spikes(Y, 0, .12 * f, .04, .5 * f, own({ 30: 1.400, 47: 1.600, 152: .5, 153: 3.200, 154: .2 })), { c: Y, w: 2, p: steps(() => (.04 + rnd() * .07) * f) }];
}
function network(lb, lp, y) {
  return [spikes(LB, 3, 8, .05, 40, lb), spikes(LP, 6, 6, .02, 10, lp), spikes(P, 3, 6, .1, 45), spikes(B, 3, 5, .06, 40), { c: B, w: 2, p: steps(() => 31 + rnd() * 6) }, spikes(Y, 1, 6, .12, 35, y), { c: Y, w: 2, p: steps(() => 3 + rnd() * 4) }];
}

const ranks = {
  traffic: () => '<div class="rank traffic">' + [['128.55', 100, 17], ['41.68', 32.4, 53], ['21.89', 17, 76], ['15.46', 16.3, 100], ['0.97', .6, 0], ['0.02', .2, 0], ['N/A', .2, 0], ['N/A', .2, 0], ['N/A', .2, 0], ['N/A', .2, 0]]
    .map(([v, w, c]) => `<b class="${v === 'N/A' ? 'na' : ''}">${v}</b><i style="width:${w}%"><u style="width:${c}%"></u></i>`).join('') + '</div>',
  uptime: () => '<div class="uptime-scroll"><div class="rank uptime">' + [341.14, 340.99, 340.14, 340.14, 340.14, 332.99, 332.99, 332.99, 332.99, 329.01, 329.01, 328.93, 328.93, 328.93, 320.12, 320.12, 318.04, 318.04, 311.9, 311.9]
    .map(v => `<b>${v.toFixed(2)}</b><i style="width:${(v / 341.14 * 100).toFixed(1)}%"></i>`).join('') + '</div></div><div class="bar-track d-flex flex-column align-items-center" aria-hidden="true"><svg width="8" height="4"><path d="M0 4h8L4 0z" fill="#a3a3a3"/></svg><div class="bar-thumb"></div><svg width="8" height="4"><path d="M0 0h8L4 4z" fill="#505050"/></svg></div><div class="veil position-absolute"></div>'
};

byId('charts').innerHTML = charts.map((c, i) => `<div class="col"><article class="widget">${head(c.t, !c.rank)}<div class="d-flex position-relative"><div class="unit">${c.u || ''}</div>${c.rank ? ranks[c.rank]() : `<div class="plot" data-i="${i}"></div>`}</div></article></div>`).join('')
  + '<div class="col"><button type="button" class="add-widget w-100 d-flex flex-column align-items-center justify-content-center gap-3"><svg width="40" height="40"><path d="M20 0v40M0 20h40" stroke="#a58bc3" stroke-width="2"/></svg><span>Add widgets</span></button></div>';

charts.forEach((c, i) => { seed = 77 + i * 31; if (c.s) c.series = c.s(); });

function draw() {
  document.querySelectorAll('.plot').forEach(el => {
    const c = charts[el.dataset.i], W = el.clientWidth, L = 25, R = W - 4, base = 131, H = 126;
    const x = m => L + (R - L) * m / 60, y = v => base - v / c.max * H;
    let o = c.k.map(v => { const g = Math.round(y(v)) + .5; return `<path d="M${L} ${g}H${R}" stroke="${v ? '#ebebed' : '#aaa'}"/><text x="${L - 3}" y="${g + 3}" text-anchor="end">${v}</text>`; }).join('');
    (c.bars || []).forEach(([t, w, parts]) => parts.forEach(([f, a, b]) => { o += `<rect x="${x(t).toFixed(1)}" y="${y(b).toFixed(1)}" width="${(x(w) - L).toFixed(1)}" height="${(y(a) - y(b)).toFixed(1)}" fill="${f}"/>`; }));
    c.series.forEach(s => { o += `<polyline fill="none" stroke="${s.c}" stroke-width="${s.w}" stroke-linejoin="round" points="${s.p.map(q => x(q[0]).toFixed(1) + ',' + y(q[1]).toFixed(1)).join(' ')}"/>`; });
    ['23:15', '23:30', '23:45', 'Thu 9'].forEach((t, n) => { const tx = Math.round(x((c.off ? 3.1 : 3.4) + n * 15)); o += `<path d="M${tx + .5} ${base}v5" stroke="#888"/><text x="${tx}" y="${base + 15}" text-anchor="middle">${t}</text>`; });
    el.innerHTML = `<svg width="${W}" height="156" role="img" aria-label="${c.t}">${o}</svg>`;
  });
}
draw();
addEventListener('resize', draw);
</script>
</body>
</html>
